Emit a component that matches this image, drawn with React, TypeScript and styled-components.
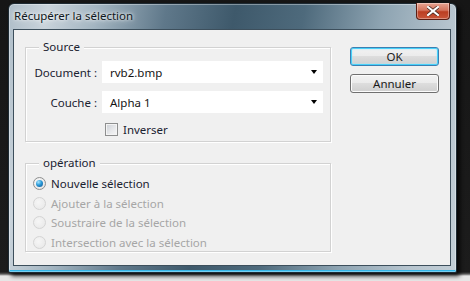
import React from 'react';
import styled, { createGlobalStyle } from 'styled-components';

const GlobalStyle = createGlobalStyle`
  html, body {
    margin: 0;
    padding: 0;
  }
  body {
    width: 470px;
    height: 281px;
    overflow: hidden;
    background: linear-gradient(to bottom, #161616 0, #1c1c1c 272px, #5a5a5a 274px, #e6e6e6 276px);
    font-family: 'Noto Sans', 'Open Sans', sans-serif;
  }
`;

const Stage = styled.div`
  padding: 3px 0 0 8px;
`;

const Window = styled.div`
  width: 449px;
  height: 270px;
  box-sizing: border-box;
  border: 1px solid #1d2a33;
  border-radius: 6px 6px 2px 2px;
  background:
    linear-gradient(100deg, #aebdc8 0%, #c9d3db 8%, #a3b5c1 18%, #5f788a 32%, #3e596b 46%, #4e6a7c 60%, #8ea4b2 76%, #b6c4ce 90%, #c2ced6 100%);
  box-shadow: 3px 3px 4px rgba(0, 0, 0, 0.8), inset 0 0 0 1px rgba(255, 255, 255, 0.35),
    inset 0 -2px 0 #33b6e8;
  display: flex;
  flex-direction: column;
  padding: 0 5px 6px 4px;
`;

const TitleBar = styled.div`
  height: 25px;
  display: flex;
  align-items: flex-start;
  justify-content: space-between;
`;

const Title = styled.div`
  font-size: 11.5px;
  color: #101820;
  padding: 4px 0 0 1px;
  text-shadow: 0 0 6px rgba(255, 255, 255, 0.95), 0 0 3px rgba(255, 255, 255, 0.9);
`;

const CloseButton = styled.div`
  width: 34px;
  height: 17px;
  margin-top: -1px;
  margin-right: 1px;
  box-sizing: border-box;
  border: 1px solid #5a1e14;
  border-top: none;
  border-radius: 0 0 4px 4px;
  background: linear-gradient(to bottom, #e8a593 0%, #d4745d 45%, #bb3e22 55%, #c9563a 100%);
  box-shadow: inset 0 0 0 1px rgba(255, 255, 255, 0.35);
  display: flex;
  align-items: center;
  justify-content: center;
`;

const Client = styled.div`
  flex: 1;
  background: #f0f0f0;
  border: 1px solid #3d4f5c;
  display: flex;
  padding: 17px 0 0 11px;
`;

const Column = styled.div`
  display: flex;
  flex-direction: column;
  gap: 21px;
`;

const GroupBox = styled.div<{ $height: number }>`
  position: relative;
  width: 306px;
  height: ${({ $height }) => $height}px;
  box-sizing: border-box;
  border: 1px solid #d2d2d2;
  box-shadow: inset 1px 1px 0 #ffffff, 1px 1px 0 #ffffff;
`;

const Legend = styled.span`
  position: absolute;
  left: 13px;
  top: -9px;
  padding: 0 4px;
  background: #f0f0f0;
  font-size: 11.5px;
  line-height: 16px;
  color: #1a2230;
`;

const FormGrid = styled.div`
  display: grid;
  grid-template-columns: 71px 221px;
  column-gap: 5px;
  row-gap: 8px;
  padding-top: 13px;
  align-items: center;
`;

const Label = styled.div`
  font-size: 11.5px;
  color: #1a2230;
  text-align: right;
`;

const Select = styled.div`
  height: 22px;
  background: #ffffff;
  display: flex;
  align-items: center;
  justify-content: space-between;
  padding: 0 6px 0 8px;
  box-sizing: border-box;
  font-size: 11.5px;
  color: #141414;
`;

const Arrow = styled.span`
  width: 0;
  height: 0;
  border-left: 3.5px solid transparent;
  border-right: 3.5px solid transparent;
  border-top: 4px solid #000;
`;

const CheckRow = styled.label`
  grid-column: 2;
  display: flex;
  align-items: center;
  gap: 5px;
  margin-left: 3px;
  margin-top: 1px;
  font-size: 11.5px;
  color: #1a2230;
`;

const Checkbox = styled.span`
  width: 13px;
  height: 13px;
  box-sizing: border-box;
  border: 1px solid #8e8f8f;
  background: linear-gradient(135deg, #cbcfd5 0%, #e9eaec 60%, #f6f6f6 100%);
  box-shadow: inset 0 0 0 1px #f4f4f4;
`;

const RadioList = styled.div`
  display: flex;
  flex-direction: column;
  padding: 10px 0 0 7px;
`;

const RadioRow = styled.div<{ $disabled?: boolean }>`
  height: 19.5px;
  display: flex;
  align-items: center;
  gap: 5px;
  font-size: 11.5px;
  color: ${({ $disabled }) => ($disabled ? '#a6a6a6' : '#1a2230')};
`;

const Radio = styled.span<{ $checked?: boolean; $disabled?: boolean }>`
  width: 13px;
  height: 13px;
  box-sizing: border-box;
  border-radius: 50%;
  border: 1px solid ${({ $disabled }) => ($disabled ? '#d4d4d4' : '#8e8f8f')};
  background: ${({ $disabled }) =>
    $disabled
      ? 'radial-gradient(circle at 40% 40%, #f6f6f6 0%, #e6e6e6 100%)'
      : 'radial-gradient(circle at 40% 40%, #ffffff 0%, #dcdcdc 100%)'};
  display: flex;
  align-items: center;
  justify-content: center;
  &::after {
    content: '';
    display: ${({ $checked }) => ($checked ? 'block' : 'none')};
    width: 7px;
    height: 7px;
    border-radius: 50%;
    background: radial-gradient(circle at 35% 30%, #a9e6ff 0%, #2a9ad8 45%, #0d4e8c 100%);
  }
`;

const Buttons = styled.div`
  display: flex;
  flex-direction: column;
  gap: 8px;
  margin-left: 19px;
`;

const Button = styled.div<{ $default?: boolean }>`
  width: 89px;
  height: 19px;
  box-sizing: border-box;
  border-radius: 3px;
  border: 1px solid ${({ $default }) => ($default ? '#3c7fb1' : '#707070')};
  background: linear-gradient(to bottom, #f2f2f2 0%, #ebebeb 49%, #dddddd 50%, #cfcfcf 100%);
  box-shadow: ${({ $default }) =>
    $default ? 'inset 0 0 0 1px #48d1fa, inset 0 0 2px 1px #a6e6fb' : 'inset 0 0 0 1px #fcfcfc'};
  display: flex;
  align-items: center;
  justify-content: center;
  font-size: 11.5px;
  color: #1a1a1a;
`;

const operations = [
  { label: 'Nouvelle sélection', checked: true },
  { label: 'Ajouter à la sélection', disabled: true },
  { label: 'Soustraire de la sélection', disabled: true },
  { label: 'Intersection avec la sélection', disabled: true },
];

const App = () => {
  return (
    <>
      <GlobalStyle />
      <Stage>
        <Window>
          <TitleBar>
            <Title>Récupérer la sélection</Title>
            <CloseButton>
              <svg width="12" height="10" viewBox="0 0 12 10">
                <path
                  d="M1 1 L11 9 M11 1 L1 9"
                  stroke="#4a2a22"
                  strokeWidth="3.6"
                  strokeLinecap="square"
                />
                <path
                  d="M1 1 L11 9 M11 1 L1 9"
                  stroke="#ffffff"
                  strokeWidth="2.2"
                  strokeLinecap="square"
                />
              </svg>
            </CloseButton>
          </TitleBar>
          <Client>
            <Column>
              <GroupBox $height={95}>
                <Legend>Source</Legend>
                <FormGrid>
                  <Label>Document :</Label>
                  <Select>
                    rvb2.bmp
                    <Arrow />
                  </Select>
                  <Label>Couche :</Label>
                  <Select>
                    Alpha 1
                    <Arrow />
                  </Select>
                  <CheckRow>
                    <Checkbox />
                    Inverser
                  </CheckRow>
                </FormGrid>
              </GroupBox>
              <GroupBox $height={89}>
                <Legend>opération</Legend>
                <RadioList>
                  {operations.map((op) => (
                    <RadioRow key={op.label} $disabled={op.disabled}>
                      <Radio $checked={op.checked} $disabled={op.disabled} />
                      {op.label}
                    </RadioRow>
                  ))}
                </RadioList>
              </GroupBox>
            </Column>
            <Buttons>
              <Button $default>OK</Button>
              <Button>Annuler</Button>
            </Buttons>
          </Client>
        </Window>
      </Stage>
    </>
  );
};

export default App;
